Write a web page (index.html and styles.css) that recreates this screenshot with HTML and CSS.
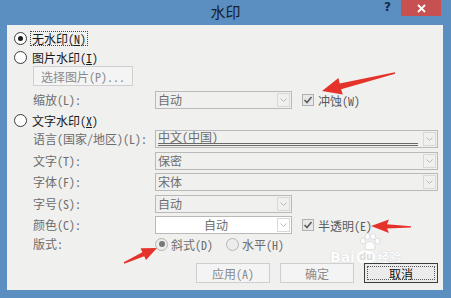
FILE: index.html
```html
<!DOCTYPE html>
<html lang="zh-CN">
<head>
    <meta charset="UTF-8">
    <meta name="viewport" content="width=device-width, initial-scale=1.0">
    <title>水印</title>
    <link rel="stylesheet" href="styles.css">
</head>
<body>
<div class="window">
    <div class="titlebar">
        <span></span>
        <span class="title">水印</span>
        <div class="caption-buttons">
            <span class="help">?</span>
            <span class="close">
                <svg width="9" height="9" viewBox="0 0 9 9"><path d="M1 1 L8 8 M8 1 L1 8" stroke="#fff" stroke-width="1.8" fill="none"/></svg>
            </span>
        </div>
    </div>

    <div class="client">
        <!-- 无水印 -->
        <div class="row opt-row">
            <span class="radio checked"></span>
            <span class="option focus">无水印(<u>N</u>)</span>
        </div>
        <div class="row opt-row mt5">
            <span class="radio"></span>
            <span class="option">图片水印(<u>I</u>)</span>
        </div>
        <div class="row btn-row indent mt2">
            <span class="button disabled pick">选择图片(P)...</span>
        </div>
        <div class="row field-row indent mt5">
            <span class="field-label">缩放(L):</span>
            <div class="combo short">
                <span class="value">自动</span>
                <span class="arrow"><svg width="7" height="5" viewBox="0 0 7 5"><path d="M0.5 0.5 L3.5 3.5 L6.5 0.5" stroke="#b8b8b8" fill="none"/></svg></span>
            </div>
            <span class="check checked"><svg width="10" height="10" viewBox="0 0 10 10"><path d="M1.5 5 L4 7.5 L8.5 2" stroke="#5f5f5f" stroke-width="1.7" fill="none"/></svg></span>
            <span class="check-label">冲蚀(W)</span>
        </div>

        <!-- 文字水印 -->
        <div class="row opt-row mt4">
            <span class="radio"></span>
            <span class="option">文字水印(<u>X</u>)</span>
        </div>
        <div class="row field-row indent mt3">
            <span class="field-label">语言(国家/地区)(L):</span>
            <div class="combo">
                <span class="value lang"><span class="lang-text">中文(中国)</span></span>
                <span class="arrow"><svg width="7" height="5" viewBox="0 0 7 5"><path d="M0.5 0.5 L3.5 3.5 L6.5 0.5" stroke="#b8b8b8" fill="none"/></svg></span>
            </div>
        </div>
        <div class="row field-row indent mt4">
            <span class="field-label">文字(T):</span>
            <div class="combo">
                <span class="value">保密</span>
                <span class="arrow"><svg width="7" height="5" viewBox="0 0 7 5"><path d="M0.5 0.5 L3.5 3.5 L6.5 0.5" stroke="#b8b8b8" fill="none"/></svg></span>
            </div>
        </div>
        <div class="row field-row indent mt3">
            <span class="field-label">字体(F):</span>
            <div class="combo">
                <span class="value">宋体</span>
                <span class="arrow"><svg width="7" height="5" viewBox="0 0 7 5"><path d="M0.5 0.5 L3.5 3.5 L6.5 0.5" stroke="#b8b8b8" fill="none"/></svg></span>
            </div>
        </div>
        <div class="row field-row indent mt4">
            <span class="field-label">字号(S):</span>
            <div class="combo short">
                <span class="value">自动</span>
                <span class="arrow"><svg width="7" height="5" viewBox="0 0 7 5"><path d="M0.5 0.5 L3.5 3.5 L6.5 0.5" stroke="#b8b8b8" fill="none"/></svg></span>
            </div>
        </div>
        <div class="row field-row indent mt3">
            <span class="field-label">颜色(C):</span>
            <div class="combo short white">
                <span class="value center">自动</span>
                <span class="arrow"><svg width="7" height="5" viewBox="0 0 7 5"><path d="M0.5 0.5 L3.5 3.5 L6.5 0.5" stroke="#b8b8b8" fill="none"/></svg></span>
            </div>
            <span class="check checked"><svg width="10" height="10" viewBox="0 0 10 10"><path d="M1.5 5 L4 7.5 L8.5 2" stroke="#5f5f5f" stroke-width="1.7" fill="none"/></svg></span>
            <span class="check-label">半透明(E)</span>
        </div>
        <div class="row opt-row indent mt3">
            <span class="field-label">版式:</span>
            <span class="radio disabled checked"></span>
            <span class="option disabled">斜式(D)</span>
            <span class="radio disabled second"></span>
            <span class="option disabled">水平(H)</span>
        </div>

        <div class="row btn-row buttons mt12">
            <span class="button disabled">应用(A)</span>
            <span class="button disabled">确定</span>
            <span class="button default"><span class="inner">取消</span></span>
        </div>
    </div>

    <div class="watermark">
        <svg class="paw" width="22" height="18" viewBox="0 0 22 18">
            <g fill="#fff" stroke="#d4d4d4" stroke-width="0.8">
                <ellipse cx="4" cy="8" rx="2.5" ry="3"/>
                <ellipse cx="8.5" cy="3.5" rx="2.5" ry="3"/>
                <ellipse cx="14" cy="3.5" rx="2.5" ry="3"/>
                <ellipse cx="18.5" cy="8" rx="2.5" ry="3"/>
                <path d="M6 15 C6 10 9 8.5 11 8.5 C13 8.5 16 10 16 15 C16 17.5 6 17.5 6 15 Z"/>
            </g>
        </svg>
        <div class="wm-text">
            <span class="wm-bai">Bai</span><span class="wm-du">du</span><span class="wm-jy">经验</span>
        </div>
    </div>

    <svg class="marks" width="451" height="298" viewBox="0 0 451 298">
        <polygon fill="#e5332c" points="322,91 338.5,78 339.7,83.4 394.8,72.2 395.2,73.8 341.1,89.2 342.8,94.5"/>
        <polygon fill="#e5332c" points="157,248 140.6,248.3 142.4,252.2 123.7,262.3 124.3,263.7 144.2,256.2 146,260.1"/>
        <polygon fill="#e5332c" points="371,226 389,219.5 387,224.2 411,226.3 411,227.6 387,228.6 389,233"/>
    </svg>
</div>
</body>
</html>
```

FILE: styles.css
```css
body {
    margin: 0;
    font-family: "Noto Sans Mono CJK SC", "Noto Sans CJK SC", sans-serif;
    font-size: 12px;
    color: #1a1a1a;
}
.window {
    position: relative;
    width: 451px;
    height: 298px;
    background: #5b8ec1;
    overflow: hidden;
}

/* title bar */
.titlebar {
    display: grid;
    grid-template-columns: 1fr auto 1fr;
    height: 25px;
}
.title {
    font-family: "Noto Sans CJK SC", sans-serif;
    font-size: 15px;
    line-height: 24px;
    color: #14202e;
}
.caption-buttons {
    justify-self: end;
    display: flex;
    align-items: flex-start;
    margin-right: 10px;
}
.help {
    font-family: "DejaVu Sans", sans-serif;
    font-weight: bold;
    font-size: 12px;
    line-height: 12px;
    color: #12284a;
    margin: 1px 10px 0 0;
}
.close {
    width: 40px;
    height: 16px;
    background: #c75050;
    display: flex;
    align-items: center;
    justify-content: center;
}

/* client area */
.client {
    margin: 0 8px 0 7px;
    height: 265px;
    box-sizing: border-box;
    padding: 6px 5px 0 7px;
    background: #f0f0ef;
}
.row {
    display: flex;
    align-items: center;
}
.opt-row { height: 14px; }
.btn-row { height: 20px; }
.field-row { height: 18px; }
.indent { padding-left: 19px; }
.mt2 { margin-top: 2px; }
.mt3 { margin-top: 3px; }
.mt4 { margin-top: 4px; }
.mt5 { margin-top: 5px; }
.mt12 { margin-top: 12px; }

/* radios */
.radio {
    width: 13px;
    height: 13px;
    box-sizing: border-box;
    border: 1px solid #3a3a3a;
    border-radius: 50%;
    background: #fff;
    display: flex;
    align-items: center;
    justify-content: center;
    flex: none;
}
.radio.checked::after {
    content: "";
    width: 5px;
    height: 5px;
    border-radius: 50%;
    background: #1c1c1c;
}
.radio.disabled {
    border-color: #b4b4b4;
    background: #ececec;
}
.radio.disabled.checked::after {
    width: 6px;
    height: 6px;
    background: #777;
}
.radio.second { margin-left: 12px; }
.option {
    margin-left: 3px;
    padding: 0 1px;
    line-height: 13px;
    border: 1px dotted transparent;
    white-space: nowrap;
}
.option.focus { border-color: #444; }
.option.disabled {
    color: #6d6d6d;
    margin-left: 2px;
    border: none;
}

/* labels and combos */
.field-label {
    width: 122px;
    flex: none;
    color: #6d6d6d;
    white-space: nowrap;
    line-height: 16px;
}
.combo {
    flex: 1;
    height: 18px;
    box-sizing: border-box;
    border: 1px solid #b9b9b9;
    background: #f0f0ef;
    display: flex;
}
.combo.short {
    flex: none;
    width: 137px;
}
.combo.white { background: #fff; }
.combo .value {
    flex: 1;
    padding-left: 2px;
    color: #6d6d6d;
    line-height: 16px;
    white-space: nowrap;
}
.combo .value.center {
    text-align: center;
    padding-left: 0;
}
.combo .value.lang {
    display: flex;
}
.lang-text {
    flex: 1;
    margin-right: 4px;
    height: 12px;
    line-height: 12px;
    border-bottom: 3px double #6a6a6a;
}
.combo .arrow {
    width: 13px;
    margin: 1px;
    box-sizing: border-box;
    border: 1px solid #d8d8d8;
    display: flex;
    align-items: center;
    justify-content: center;
}

/* checkboxes */
.check {
    width: 12px;
    height: 12px;
    box-sizing: border-box;
    border: 1px solid #b0b0b0;
    background: #e8e8e8;
    margin-left: 10px;
    display: flex;
    align-items: center;
    justify-content: center;
    flex: none;
}
.check-label {
    margin-left: 4px;
    color: #5a5a5a;
    white-space: nowrap;
}

/* buttons */
.button {
    height: 20px;
    box-sizing: border-box;
    border: 1px solid #cfcfcf;
    background: #f4f4f4;
    display: flex;
    align-items: center;
    justify-content: center;
    color: #8a8a8a;
    white-space: nowrap;
}
.button.pick { width: 100px; }
.buttons {
    justify-content: flex-end;
    gap: 10px;
}
.buttons .button { width: 74px; }
.button.default {
    border-color: #3c3c3c;
    background: #ebebeb;
    color: #111;
    padding: 2px;
}
.button.default .inner {
    flex: 1;
    align-self: stretch;
    border: 1px dotted #555;
    display: flex;
    align-items: center;
    justify-content: center;
}

/* baidu watermark, sits over the dialog */
.watermark {
    position: absolute;
    left: 330px;
    top: 233px;
    display: flex;
    flex-direction: column;
    align-items: center;
    opacity: 0.9;
}
.paw { margin-left: 8px; }
.wm-text {
    display: flex;
    align-items: center;
    height: 12px;
    font-family: "DejaVu Sans", sans-serif;
    font-weight: bold;
    color: #fff;
    text-shadow: 0 0 1px #bcbcbc;
}
.wm-bai { font-size: 14px; line-height: 12px; }
.wm-du {
    font-size: 10px;
    line-height: 12px;
    background: #fff;
    color: #dcdcdc;
    text-shadow: none;
    border-radius: 6px;
    padding: 0 2px;
    margin-left: 2px;
}
.wm-jy {
    font-family: "Noto Sans CJK SC", sans-serif;
    font-size: 12px;
    line-height: 12px;
    margin-left: 2px;
}

/* annotation arrows */
.marks {
    position: absolute;
    left: 0;
    top: 0;
    pointer-events: none;
}
```
